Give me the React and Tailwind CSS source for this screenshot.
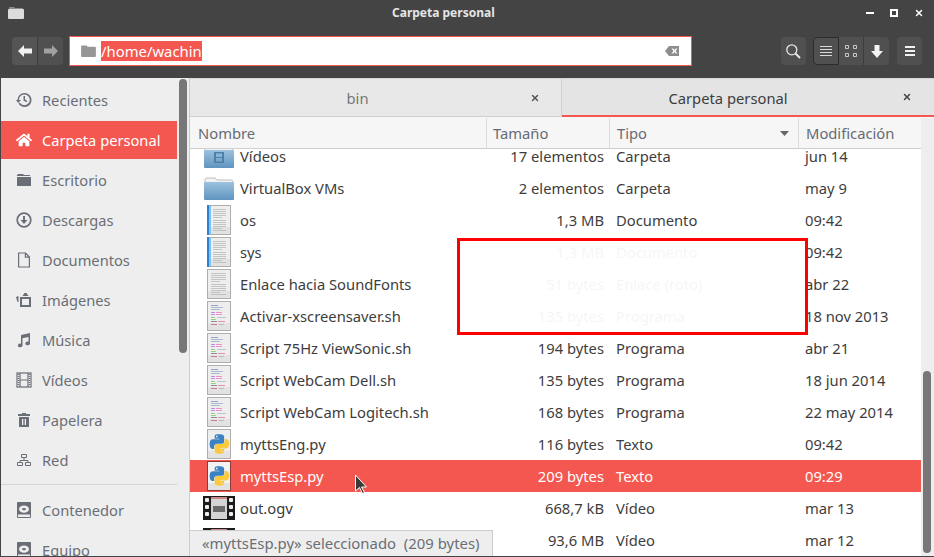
import { X } from "lucide-react";
import { FaHome } from "react-icons/fa";

const font = { fontFamily: '"Noto Sans", sans-serif' };

function SideIcon({ name }) {
  if (name === "home") return <FaHome className="w-4 h-4" />;
  const common = { width: 16, height: 16, viewBox: "0 0 16 16", fill: "currentColor" };
  if (name === "history")
    return (
      <svg {...common}>
        <path d="M8.5 1a7 7 0 1 1-6 10.6l1.4-.8A5.4 5.4 0 1 0 3 8h2L2.2 11 0 8h1.5a7 7 0 0 1 7-7z" />
        <path d="M7.5 4H9v3.6l2.4 1.5-.8 1.2L7.5 8.4z" />
      </svg>
    );
  if (name === "desktop")
    return (
      <svg {...common}>
        <path d="M2 2h5l1 1h6v1H1V3zM1 5h14v9H1z" />
      </svg>
    );
  if (name === "download")
    return (
      <svg {...common} fill="none" stroke="currentColor">
        <circle cx="8" cy="8" r="6.8" strokeWidth="1.7" />
        <path d="M7 4h2v4h2.5L8 12 4.5 8H7z" fill="currentColor" stroke="none" />
      </svg>
    );
  if (name === "doc")
    return (
      <svg {...common} fill="none" stroke="currentColor" strokeWidth="1.2">
        <path d="M2.6 1h7l3.8 4v10H2.6zM9.4 1v4.2h4" />
      </svg>
    );
  if (name === "image")
    return (
      <svg {...common}>
        <path d="M4 5h11v10H4zM6 7v6h7V7zM6.5 4l2-3h2l2 3zM0 5l2.5-1v6H1.500z" fillRule="evenodd" />
      </svg>
    );
  if (name === "music")
    return (
      <svg {...common}>
        <path d="M5 3l9-2v10.500a2.300 1.800 0 1 1-1.500-1.700V5L6.500 6.300v7.200a2.300 1.800 0 1 1-1.500-1.700z" />
      </svg>
    );
  if (name === "video")
    return (
      <svg {...common} fill="none" stroke="currentColor" strokeWidth="1.2">
        <rect x="1" y="1" width="14" height="14" />
        <path d="M4 1v14M12 1v14M4 8h8" />
        <path d="M2.5 2v12M13.5 2v12" strokeDasharray="1 1" />
      </svg>
    );
  if (name === "trash")
    return (
      <svg {...common}>
        <path d="M6 1h4v1h4v2H2V2h4zM3 5h10v10H3zM6 7v6h1.300V7zM8.700 7v6H10V7z" fillRule="evenodd" />
      </svg>
    );
  if (name === "net")
    return (
      <svg {...common} fill="none" stroke="currentColor">
        <path d="M5.5 2.5h5v3h-5zM1.500 10.500h5v3h-5zM9.500 10.500h5v3h-5zM8 5.500v3M4 10.500v-2h8v2" />
      </svg>
    );
  if (name === "disk")
    return (
      <svg {...common}>
        <path d="M2 0h12a1 1 0 0 1 1 1v14a1 1 0 0 1-1 1H2a1 1 0 0 1-1-1V1a1 1 0 0 1 1-1zm0 12.500V15h12v-2.500zM8 3.500a5 3.600 0 1 0 0 7.200 5 3.600 0 0 0 0-7.200zm0 2.400a2 1.200 0 1 1 0 2.400 2 1.200 0 0 1 0-2.400z" fillRule="evenodd" />
      </svg>
    );
  return null;
}

const places = [
  ["history", "Recientes"],
  ["home", "Carpeta personal", true],
  ["desktop", "Escritorio"],
  ["download", "Descargas"],
  ["doc", "Documentos"],
  ["image", "Imágenes"],
  ["music", "Música"],
  ["video", "Vídeos"],
  ["trash", "Papelera"],
  ["net", "Red"],
];

const files = [
  { icon: "vfolder", name: "Vídeos", size: "17 elementos", type: "Carpeta", date: "jun 14" },
  { icon: "folder", name: "VirtualBox VMs", size: "2 elementos", type: "Carpeta", date: "may 9" },
  { icon: "bluedoc", name: "os", size: "1,3 MB", type: "Documento", date: "09:42" },
  { icon: "bluedoc", name: "sys", size: "1,3 MB", type: "Documento", date: "09:42" },
  { icon: "text", name: "Enlace hacia SoundFonts", size: "51 bytes", type: "Enlace (roto)", date: "abr 22" },
  { icon: "script", name: "Activar-xscreensaver.sh", size: "135 bytes", type: "Programa", date: "18 nov 2013" },
  { icon: "script", name: "Script 75Hz ViewSonic.sh", size: "194 bytes", type: "Programa", date: "abr 21" },
  { icon: "script", name: "Script WebCam Dell.sh", size: "135 bytes", type: "Programa", date: "18 jun 2014" },
  { icon: "script", name: "Script WebCam Logitech.sh", size: "168 bytes", type: "Programa", date: "22 may 2014" },
  { icon: "python", name: "myttsEng.py", size: "116 bytes", type: "Texto", date: "09:42" },
  { icon: "python", name: "myttsEsp.py", size: "209 bytes", type: "Texto", date: "09:29", selected: true },
  { icon: "film", name: "out.ogv", size: "668,7 kB", type: "Vídeo", date: "mar 13" },
  { icon: "film", name: "", size: "93,6 MB", type: "Vídeo", date: "mar 12" },
];

const pyPath =
  "M54.9.9c-4.6 0-9 .4-12.8 1.100C30.8 4 28.8 8.2 28.8 15.9v10.2h26.2v3.4H19c-7.6 0-14.3 4.6-16.4 13.3-2.4 10-2.5 16.2 0 26.6C4.5 77.2 9 82.8 16.7 82.8h9v-12c0-8.7 7.5-16.3 16.4-16.3h26.2c7.3 0 13.1-6 13.1-13.3v-25c0-7.1-6-12.4-13.1-13.6C63.8 1.2 59.5.9 54.9.9zM40.7 9c2.7 0 4.9 2.2 4.9 5s-2.2 4.9-4.9 4.9-4.9-2.2-4.9-4.9 2.2-5 4.9-5z";

// x, y, width, colour of the tiny code lines on a script thumbnail
const scriptLines = [
  [4, 4, 7, "#8fa6c4"],
  [4, 6, 12, "#a9bbd2"],
  [4, 8, 9, "#a9bbd2"],
  [4, 11, 4, "#b98fe0"],
  [9, 11, 6, "#ec8fd0"],
  [4, 13, 4, "#b98fe0"],
  [9, 13, 6, "#ec8fd0"],
  [4, 16, 4, "#9bd08a"],
  [10, 16, 9, "#b5c7da"],
  [4, 18, 5, "#9bd08a"],
  [4, 20, 6, "#8a8a8a"],
  [11, 20, 7, "#e58fa8"],
  [4, 23, 6, "#c77f8f"],
  [12, 23, 5, "#bbbbbb"],
];

function PageLines({ left = 5 }) {
  const ys = [4, 6, 8, 10, 12, 15, 17, 19, 21, 23, 25];
  return ys.map((y, i) => (
    <rect key={y} x={left} y={y} width={i % 5 === 4 ? 9 : 19 - left} height=".8" fill="#b9b9b9" />
  ));
}

function FileIcon({ kind, selected }) {
  if (kind === "folder" || kind === "vfolder")
    return (
      <svg width="30" height="23" viewBox="0 0 30 23" className="block">
        <defs>
          <linearGradient id="fold" x1="0" y1="0" x2="0" y2="1">
            <stop offset="0" stopColor="#9cc2de" />
            <stop offset="1" stopColor="#5f94c0" />
          </linearGradient>
        </defs>
        <path d="M1 3q0-2 2-2h8l2 2h14q2 0 2 2v3H1z" fill="#f2f2f2" stroke="#bdbdbd" />
        <rect x="0" y="5" width="30" height="18" rx="1" fill="url(#fold)" />
        {kind === "vfolder" && <path d="M10 7h10v11H10zM12 8.500v3.500h6V8.500zM12 13v3.500h6V13z" fill="#4f7fa6" fillRule="evenodd" />}
      </svg>
    );
  if (kind === "film")
    return (
      <svg width="32" height="24" viewBox="0 0 32 24" className="block">
        <rect width="32" height="24" fill="#1c1c1c" />
        <rect x="8" y="1" width="16" height="22" fill="#d4d4d4" />
        <rect x="10" y="10" width="12" height="6" fill="#6a6a6a" />
        <rect x="8" y="1" width="16" height="2" fill="#c88" />
        {[2, 9, 16].map((y) => (
          <g key={y} fill="#eee">
            <rect x="2" y={y} width="4" height="4" rx="1" />
            <rect x="26" y={y} width="4" height="4" rx="1" />
          </g>
        ))}
      </svg>
    );
  return (
    <svg width="24" height="30" viewBox="0 0 24 30" className="block">
      <rect x=".5" y=".5" width="23" height="29" fill={selected ? "#f2f2f2" : "#eeeeee"} stroke={selected ? "#8f3a36" : "#adadad"} />
      <rect x="1" y="22" width="22" height="7" fill="#e2e2e2" />
      {kind === "bluedoc" && (
        <>
          <rect x="0" y="0" width="2" height="30" fill="#2f80d0" />
          <rect x="2" y="1" width="2" height="28" fill="#7cc4f2" />
          <PageLines left={6} />
        </>
      )}
      {kind === "text" && <PageLines left={4} />}
      {kind === "script" &&
        scriptLines.map(([x, y, w, c]) => <rect key={`${x}-${y}`} x={x} y={y} width={w} height="1" fill={c} />)}
      {kind === "python" && (
        <g transform="translate(2.5 5) scale(.18)">
          <path d={pyPath} fill="#3b82c4" />
          <path d={pyPath} fill="#fbc93d" transform="rotate(180 55 55)" />
        </g>
      )}
    </svg>
  );
}

function ToolButton({ children, className = "" }) {
  return <div className={`h-7 flex items-center justify-center bg-[#505050] text-white ${className}`}>{children}</div>;
}

function App() {
  return (
    <div style={font} className="relative w-[934px] h-[557px] overflow-hidden flex flex-col bg-[#444444] border-b border-l border-[#444444]">
      {/* title bar */}
      <div className="h-[26px] shrink-0 flex items-center pl-[7px] pr-[10px] text-[#e4e4e4]">
        <svg width="16" height="14" viewBox="0 0 16 14">
          <path d="M1 2q0-1 1-1h4l1 1h7q1 0 1 1v2H1z" fill="#8c8c8c" />
          <rect x="0" y="3" width="16" height="10" rx="1" fill="#dcdcdc" />
        </svg>
        <span className="ml-[368px] text-[12px] font-bold leading-none">Carpeta personal</span>
        <div className="ml-auto flex items-center gap-[16px]">
          <div className="w-2 h-[2px] bg-white" />
          <div className="w-2 h-2 border-2 border-white" />
          <X className="w-[10px] h-[10px] text-white" strokeWidth={3.5} />
        </div>
      </div>

      {/* toolbar */}
      <div className="h-[52px] shrink-0 flex items-start pt-[11px] pl-[11px] pr-[11px]">
        <div className="flex">
          <ToolButton className="w-[25px] rounded-l-sm bg-[#555555]">
            <svg width="14" height="12" viewBox="0 0 14 12" fill="#f2f2f2">
              <path d="M0 6l6-6v3.500h8v5H6V12z" />
            </svg>
          </ToolButton>
          <ToolButton className="w-[26px] rounded-r-sm border-l border-[#3c3c3c] bg-[#4d4d4d]">
            <svg width="14" height="12" viewBox="0 0 14 12" fill="#a0a0a0">
              <path d="M14 6L8 0v3.500H0v5h8V12z" />
            </svg>
          </ToolButton>
        </div>
        <div className="ml-[6px] w-[623px] h-[30px] -mt-px bg-white border border-[#f4574f] flex items-center pl-[11px] pr-[12px]">
          <svg width="15" height="12" viewBox="0 0 16 13" fill="#969696">
            <path d="M0 1.500Q0 .5 1 .5h5l1 1.500h8q1 0 1 1V12q0 1-1 1H1q-1 0-1-1z" />
          </svg>
          <span className="ml-[5px] bg-[#f4574f] text-white text-[14.85px] leading-[20px] h-[20px]">/home/wachin</span>
          <svg className="ml-auto" width="14" height="10" viewBox="0 0 14 10" fill="#8d8d8d">
            <path d="M4 0h10v10H4L0 5zM6.500 2.500l2 2.500-2 2.500h1.700L9.500 6l1.300 1.500h1.700L10.500 5l2-2.500h-1.700L9.500 4 8.200 2.500z" fillRule="evenodd" />
          </svg>
        </div>
        <ToolButton className="ml-[89px] w-[25px] rounded-sm">
          <svg width="15" height="15" viewBox="0 0 15 15" fill="none" stroke="#e8e8e8" strokeWidth="1.3">
            <circle cx="5.8" cy="5.8" r="5" />
            <path d="M9.500 9.500L14 14" strokeWidth="2" />
          </svg>
        </ToolButton>
        <div className="ml-[7px] flex">
          <ToolButton className="w-[26px] rounded-l-sm bg-[#333333] border border-[#2c2c2c]">
            <svg width="12" height="10" viewBox="0 0 12 10" fill="#d8d8d8">
              <path d="M0 0h12v1H0zM0 3h12v1H0zM0 6h12v1H0zM0 9h12v1H0z" />
            </svg>
          </ToolButton>
          <ToolButton className="w-[25px] border-r border-[#3c3c3c]">
            <svg width="12" height="12" viewBox="0 0 12 12" fill="none" stroke="#c8c8c8">
              <path d="M.5.5h3v3h-3zM8.500.5h3v3h-3zM.5 8.500h3v3h-3zM8.500 8.500h3v3h-3z" />
            </svg>
          </ToolButton>
          <ToolButton className="w-[25px] rounded-r-sm">
            <svg width="12" height="13" viewBox="0 0 12 13" fill="#f2f2f2">
              <path d="M3.5 0h5v6H12l-6 7-6-7h3.500z" />
            </svg>
          </ToolButton>
        </div>
        <ToolButton className="ml-[8px] w-[25px] rounded-sm">
          <svg width="10" height="10" viewBox="0 0 10 10" fill="#f2f2f2">
            <path d="M0 0h10v2H0zM0 4h10v2H0zM0 8h10v2H0z" />
          </svg>
        </ToolButton>
      </div>

      <div className="flex-1 flex min-h-0">
        {/* sidebar */}
        <aside className="relative w-[189px] shrink-0 bg-[#eeeeee] border-r border-[#cccccc] overflow-hidden pt-[2px] text-[#6a6e76] text-[14.67px]">
          {places.map(([icon, label, active]) => (
            <div key={label} className="h-10 w-[176px] py-px">
              <div className={`h-[38px] flex items-center pl-[15px] ${active ? "bg-[#f4574f] text-white" : ""}`}>
                <SideIcon name={icon} />
                <span className="ml-[10px]">{label}</span>
              </div>
            </div>
          ))}
          <div className="w-[176px] h-px mt-[4px] mb-[5px] bg-[#d5d5d5]" />
          {[
            ["disk", "Contenedor"],
            ["disk", "Equipo"],
          ].map(([icon, label]) => (
            <div key={label} className="h-10 w-[176px] flex items-center pl-[15px]">
              <SideIcon name={icon} />
              <span className="ml-[10px]">{label}</span>
            </div>
          ))}
          <div className="absolute left-[178px] top-[1px] w-2 h-[274px] rounded bg-[#777777]" />
        </aside>

        {/* main */}
        <main className="relative flex-1 flex flex-col min-w-0 bg-white text-[14.75px] text-[#3d3d3d]">
          <div className="h-10 shrink-0 flex bg-[#e4e4e4] border-t border-[#d6d6d6] border-b border-b-[#f6f6f6]">
            <div className="w-[372px] flex items-center justify-center relative bg-[#e8e8e8] text-[#777] border-b border-[#cfcfcf] border-r">
              <span className="-ml-[36px] pt-px">bin</span>
              <X className="absolute right-[21px] w-[10px] h-[10px] text-[#555]" strokeWidth={3.5} />
            </div>
            <div className="flex-1 flex items-center justify-center relative border-b-2 border-[#f4574f]">
              <span className="-ml-[40px] pt-[2px]">Carpeta personal</span>
              <X className="absolute right-[22px] w-[10px] h-[10px] text-[#444]" strokeWidth={3.5} />
            </div>
          </div>

          <div className="h-[31px] shrink-0 flex text-[#666b73] bg-[#eeeeee]">
            <div className="flex w-[731px] bg-[#f6f6f6] border-b border-[#cfcfcf]">
              <div className="w-[297px] pl-[8px] flex items-center border-r border-[#dddddd]">Nombre</div>
              <div className="w-[123px] pl-[6px] flex items-center border-r border-[#dddddd]">Tamaño</div>
              <div className="w-[189px] pl-[7px] flex items-center justify-between pr-[9px] border-r border-[#dddddd]">
                <span>Tipo</span>
                <svg width="9" height="5" viewBox="0 0 9 5" fill="#666">
                  <path d="M0 0h9L4.5 5z" />
                </svg>
              </div>
              <div className="flex-1 pl-[7px] flex items-center">Modificación</div>
            </div>
          </div>

          <div className="flex-1 min-h-0 flex overflow-hidden">
            <div className="w-[731px] shrink-0 -mt-[9px]">
              {files.map((f, i) => (
                <div key={i} className={`h-8 flex items-center ${f.selected ? "bg-[#f4574f] text-white" : ""}`}>
                  <div className="w-[58px] -mr-[8px] shrink-0 flex justify-center">
                    <FileIcon kind={f.icon} selected={f.selected} />
                  </div>
                  <div className="w-[247px] shrink-0 whitespace-nowrap">{f.name}</div>
                  <div className="w-[117px] shrink-0 text-right whitespace-nowrap">{f.size}</div>
                  <div className="w-[12px] shrink-0" />
                  <div className="w-[189px] shrink-0 whitespace-nowrap">{f.type}</div>
                  <div className="whitespace-nowrap">{f.date}</div>
                </div>
              ))}
            </div>
            <div className="flex-1 bg-[#eeeeee] relative">
              <div className="absolute left-[2px] top-[222px] w-2 h-[182px] rounded bg-[#777777]" />
            </div>
          </div>

          {/* status overlay */}
          <div className="absolute left-0 bottom-0 w-[303px] h-[26px] bg-[#eeeeee] border-t border-r border-[#cccccc] pl-[12px] flex items-center text-[#6a6e76] text-[14.9px] whitespace-pre">
            «myttsEsp.py» seleccionado  (209 bytes)
          </div>
        </main>
      </div>

      {/* red annotation box */}
      <div className="absolute left-[456px] top-[238px] w-[351px] h-[97px] border-[3px] border-[#ff0000] bg-white/95" />

      {/* mouse pointer */}
      <svg className="absolute left-[353px] top-[474px]" width="14" height="21" viewBox="0 0 14 21">
        <path d="M1.5 1v16l4-3.500 3 6 2-1-3-5.500h5z" fill="#3a3a3a" stroke="#fff" />
      </svg>
    </div>
  );
}

export default App;
